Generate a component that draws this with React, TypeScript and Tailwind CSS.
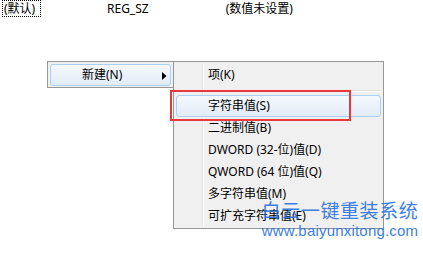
import React from "react";

const font = { fontFamily: '"Noto Sans", "Noto Sans CJK SC", sans-serif' };

function Item({ label, highlight }: { label: string; highlight?: boolean }) {
  return (
    <div
      className={
        "relative h-[22px] flex items-center pl-[31px] text-[12px] text-black rounded-[3px] border " +
        (highlight
          ? "border-[#a9d0f6] bg-gradient-to-b from-[#f5f9fd] to-[#e2ebf7]"
          : "border-transparent")
      }
    >
      {label}
    </div>
  );
}

export default function App() {
  return (
    <div className="relative w-[423px] h-[253px] bg-white overflow-hidden" style={font}>
      <div className="flex items-center h-[17px] text-[12px] text-black">
        <div className="ml-[2px] w-[39px] h-[17px] border border-dotted border-black flex items-center pl-[1px]">(默认)</div>
        <div className="ml-[66px]">REG_SZ</div>
        <div className="ml-[77px]">(数值未设置)</div>
      </div>

      {/* main menu */}
      <div className="absolute left-[47px] top-[61px] w-[127px] h-[27px] bg-[#f0f0f0] border border-[#979797] p-[2px]">
        <div className="relative h-[22px] flex items-center pl-[31px] text-[12px] text-black rounded-[3px] border border-[#a9d0f6] bg-gradient-to-b from-[#f5f9fd] to-[#e2ebf7]">
          新建(N)
          <svg className="absolute left-[111px] top-[7px]" width="5" height="8" viewBox="0 0 5 8">
            <path d="M0 0 L4.5 4 L0 8 Z" fill="#000" />
          </svg>
        </div>
      </div>

      {/* submenu */}
      <div className="absolute left-[173px] top-[61px] w-[211px] h-[168px] bg-[#f0f0f0] border border-[#979797] pt-[2px] px-[2px] pb-[1px]">
        <div className="absolute left-[28px] top-[2px] bottom-[2px] w-[1px] bg-[#e2e3e3]" />
        <div className="absolute left-[29px] top-[2px] bottom-[2px] w-[1px] bg-[#ffffff]" />
        <div className="relative flex flex-col">
          <Item label="项(K)" />
          <div className="h-[9px] flex flex-col justify-center pl-[28px]">
            <div className="h-[1px] bg-[#e0e0e0]" />
            <div className="h-[1px] bg-white" />
          </div>
          <Item label="字符串值(S)" highlight />
          <Item label="二进制值(B)" />
          <Item label="DWORD (32-位)值(D)" />
          <Item label="QWORD (64 位)值(Q)" />
          <Item label="多字符串值(M)" />
          <Item label="可扩充字符串值(E)" />
        </div>
      </div>

      {/* red highlight box */}
      <div className="absolute left-[170px] top-[90px] w-[181px] h-[31px] border-2 border-[#e8383b]" />

      {/* watermark */}
      <div className="absolute left-[261px] top-[197px] w-[158px] flex flex-col items-center opacity-90 text-[#2a72df] whitespace-nowrap">
        <div className="text-[19px] leading-[25px] tracking-[0.6px]" style={{ fontFamily: '"Noto Sans CJK SC", sans-serif' }}>白云一键重装系统</div>
        <div className="text-[15px] leading-[17px] tracking-[0.2px]" style={{ fontFamily: '"Liberation Sans", Arial, sans-serif' }}>www.baiyunxitong.com</div>
      </div>
    </div>
  );
}
